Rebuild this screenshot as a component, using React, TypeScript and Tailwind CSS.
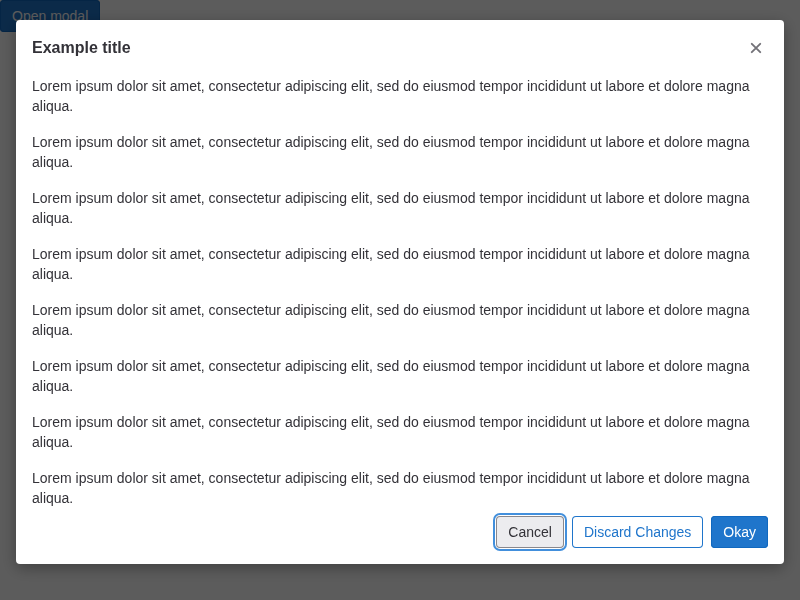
import { useEffect, useRef } from "react";

const LOREM =
  "Lorem ipsum dolor sit amet, consectetur adipiscing elit, sed do eiusmod tempor incididunt ut labore et dolore magna aliqua.";

const paragraphs = Array.from({ length: 8 }, () => LOREM);

function CloseIcon() {
  return (
    <svg
      aria-hidden="true"
      className="size-4"
      viewBox="0 0 16 16"
      fill="none"
      stroke="currentColor"
      strokeWidth="1.9"
      strokeLinecap="round"
    >
      <path d="M3.8 3.8l8.4 8.4M12.2 3.8l-8.4 8.4" />
    </svg>
  );
}

const buttonBase = "h-8 rounded px-3 text-sm leading-4 outline-none cursor-pointer";
const confirm = "bg-[#1f75cb] text-white shadow-[inset_0_0_0_1px_#1068bf]";
const secondary = "bg-white text-[#1f75cb] shadow-[inset_0_0_0_1px_#1f75cb]";
const neutral =
  "bg-white text-[#333238] shadow-[inset_0_0_0_1px_#bfbfc3] focus:bg-[#ececef] focus:shadow-[inset_0_0_0_1px_#89888d,0_0_0_1px_#fff,0_0_0_3px_#428fdc]";

export default function App() {
  const cancelRef = useRef<HTMLButtonElement>(null);

  useEffect(() => {
    cancelRef.current?.focus();
  }, []);

  return (
    <div className="min-h-screen bg-white font-['Liberation_Sans',Arial,sans-serif] text-sm leading-5 text-[#333238]">
      <button type="button" className={`${buttonBase} ${confirm}`}>
        Open modal
      </button>

      <div className="fixed inset-0 bg-black/64 px-4 pt-5 pb-9">
        <div
          role="dialog"
          aria-modal="true"
          aria-labelledby="modal-title"
          className="flex max-h-full flex-col rounded bg-white shadow-[0_4px_16px_rgba(0,0,0,0.32)]"
        >
          <header className="flex items-center justify-between px-4 pt-4 pb-2">
            <h2 id="modal-title" className="text-base leading-6 font-bold">
              Example title
            </h2>
            <button
              type="button"
              aria-label="Close"
              className="flex size-6 items-center justify-center rounded text-[#737278]"
            >
              <CloseIcon />
            </button>
          </header>

          <div className="min-h-0 flex-1 space-y-4 overflow-y-auto px-4 pt-2 [scrollbar-width:none]">
            {paragraphs.map((text, i) => (
              <p key={i}>{text}</p>
            ))}
          </div>

          <footer className="flex justify-end gap-2 px-4 pt-2 pb-4">
            <button ref={cancelRef} type="button" className={`${buttonBase} ${neutral}`}>
              Cancel
            </button>
            <button type="button" className={`${buttonBase} ${secondary}`}>
              Discard Changes
            </button>
            <button type="button" className={`${buttonBase} ${confirm}`}>
              Okay
            </button>
          </footer>
        </div>
      </div>
    </div>
  );
}
